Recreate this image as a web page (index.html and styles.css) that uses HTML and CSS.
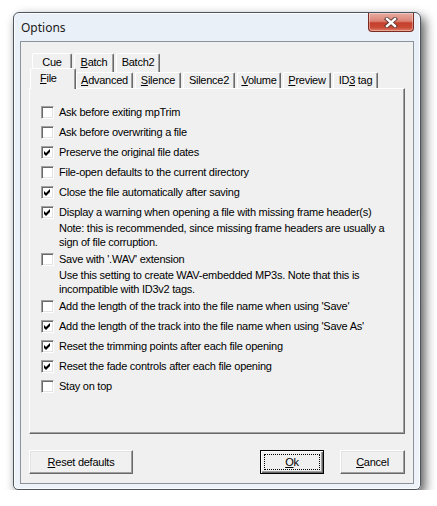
FILE: index.html
```html
<!DOCTYPE html>
<html lang="en">
<head>
  <meta charset="UTF-8">
  <title>Options</title>
  <link rel="stylesheet" href="styles.css">
</head>
<body>

<!-- Dialog window -->
<div class="window">
  <div class="titlebar">
    <span class="title">Options</span>
    <span class="close">
      <svg width="14" height="11" viewBox="0 0 14 11">
        <path d="M3 2 L11 9 M11 2 L3 9" stroke="#5a3430" stroke-width="4.2" stroke-linecap="square" fill="none"/>
        <path d="M3 2 L11 9 M11 2 L3 9" stroke="#fff" stroke-width="2.4" stroke-linecap="square" fill="none"/>
      </svg>
    </span>
  </div>

  <div class="client">
    <!-- Tabs -->
    <div class="tabs">
      <div class="tab-row back">
        <span class="tab w-cue"><span>Cue</span></span>
        <span class="tab w-batch"><span><u>B</u>atch</span></span>
        <span class="tab w-batch2"><span>Batch2</span></span>
      </div>
      <div class="tab-row front">
        <span class="tab w-file selected"><span><u>F</u>ile</span></span>
        <span class="tab w-adv"><span><u>A</u>dvanced</span></span>
        <span class="tab w-sil"><span><u>S</u>ilence</span></span>
        <span class="tab w-sil2"><span>Silence2</span></span>
        <span class="tab w-vol"><span><u>V</u>olume</span></span>
        <span class="tab w-prev"><span><u>P</u>review</span></span>
        <span class="tab w-id3"><span>ID<u>3</u> tag</span></span>
      </div>
    </div>

    <!-- Tab page -->
    <div class="panel">
      <div class="opt"><span class="cb"></span><div class="text">Ask before exiting mpTrim</div></div>
      <div class="opt"><span class="cb"></span><div class="text">Ask before overwriting a file</div></div>
      <div class="opt"><span class="cb checked"></span><div class="text">Preserve the original file dates</div></div>
      <div class="opt"><span class="cb"></span><div class="text">File-open defaults to the current directory</div></div>
      <div class="opt"><span class="cb checked"></span><div class="text">Close the file automatically after saving</div></div>
      <div class="opt long">
        <span class="cb checked"></span>
        <div class="text">
          Display a warning when opening a file with missing frame header(s)
          <div class="note">Note: this is recommended, since missing frame headers are usually a sign of file corruption.</div>
        </div>
      </div>
      <div class="opt long">
        <span class="cb"></span>
        <div class="text">
          Save with '.WAV' extension
          <div class="note">Use this setting to create WAV-embedded MP3s. Note that this is incompatible with ID3v2 tags.</div>
        </div>
      </div>
      <div class="opt"><span class="cb"></span><div class="text">Add the length of the track into the file name when using 'Save'</div></div>
      <div class="opt"><span class="cb checked"></span><div class="text">Add the length of the track into the file name when using 'Save As'</div></div>
      <div class="opt"><span class="cb checked"></span><div class="text">Reset the trimming points after each file opening</div></div>
      <div class="opt"><span class="cb checked"></span><div class="text">Reset the fade controls after each file opening</div></div>
      <div class="opt"><span class="cb"></span><div class="text">Stay on top</div></div>
    </div>

    <!-- Buttons -->
    <div class="buttons">
      <span class="btn w-reset"><span><u>R</u>eset defaults</span></span>
      <div class="btn-group">
        <span class="btn default w-ok"><span class="focus"><span><u>O</u>k</span></span></span>
        <span class="btn w-cancel"><span><u>C</u>ancel</span></span>
      </div>
    </div>
  </div>
</div>

</body>
</html>
```

FILE: styles.css
```css
/* General */
* {
  box-sizing: border-box;
}
body {
  margin: 0;
  background: #fff;
  font-family: "Liberation Sans", Arial, sans-serif;
  font-size: 11px;
  letter-spacing: -0.25px;
  color: #000;
}

/* Window frame */
.window {
  width: 408px;
  height: 478px;
  margin: 12px 0 0 13px;
  border: 1px solid #4c5560;
  border-radius: 6px 6px 5px 5px;
  background: linear-gradient(#e9f0f8, #eef3fa);
  box-shadow: inset 0 0 0 1px #fbfdff, 4px 5px 11px rgba(0, 0, 0, 0.65);
  padding: 0 6px 5px 6px;
  display: flex;
  flex-direction: column;
}

.titlebar {
  height: 28px;
  display: flex;
  justify-content: space-between;
  align-items: flex-start;
}
.title {
  font-family: "Noto Sans", "Open Sans", sans-serif;
  font-size: 12px;
  letter-spacing: 0;
  color: #1b1b1b;
  padding: 6px 0 0 1px;
}
.close {
  width: 46px;
  height: 19px;
  border: 1px solid #7d2a20;
  border-top: none;
  border-radius: 0 0 4px 4px;
  background: linear-gradient(#e8aca2 0%, #dc8476 45%, #c5402c 55%, #c94a36 80%, #de7f68 100%);
  box-shadow: inset 0 0 0 1px rgba(255, 255, 255, 0.35);
  display: flex;
  justify-content: center;
  align-items: center;
}

/* Client area */
.client {
  flex: 1;
  border: 1px solid #8a929c;
  background: #f0f0f0;
  padding: 11px 8px 9px 8px;
  display: flex;
  flex-direction: column;
}

/* Tabs */
.tabs {
  padding-left: 3px;
}
.tab-row {
  display: flex;
  gap: 2px;
}
.tab-row.back {
  height: 19px;
}
.tab-row.front {
  height: 16px;
}
.tab {
  height: 100%;
  border-top: 1px solid #fff;
  border-left: 1px solid #fff;
  border-right: 1px solid #696969;
  border-radius: 2px 2px 0 0;
  box-shadow: inset -1px 0 #a0a0a0;
  display: flex;
  justify-content: center;
  align-items: center;
  padding-bottom: 1px;
}
.tab-row.back .tab {
  padding-bottom: 3px;
}
.tab.selected {
  position: relative;
  z-index: 1;
  height: 21px;
  margin: -4px -2px 0 -2px;
  width: 46px !important;
  background: #f0f0f0;
  justify-content: flex-start;
  padding: 0 0 3px 9px;
}
.w-cue { width: 40px; }
.w-batch { width: 40px; }
.w-batch2 { width: 44px; }
.w-file { width: 42px; }
.w-adv { width: 57px; }
.w-sil { width: 46px; }
.w-sil2 { width: 52px; }
.w-vol { width: 44px; }
.w-prev { width: 48px; }
.w-id3 { width: 45px; }

/* Tab page */
.panel {
  height: 346px;
  border-top: 1px solid #fff;
  border-left: 1px solid #fff;
  border-right: 1px solid #696969;
  border-bottom: 1px solid #696969;
  box-shadow: inset -1px -1px #a0a0a0;
  padding: 16px 10px 0 11px;
}

.opt {
  display: flex;
  gap: 5px;
  line-height: 14px;
  margin-bottom: 6px;
}
.opt.long {
  margin-bottom: 3px;
}
.note {
  margin-top: 2px;
  width: 330px;
}

/* Classic checkbox */
.cb {
  flex: none;
  width: 13px;
  height: 13px;
  margin-top: 1px;
  border: 1px solid;
  border-color: #a0a0a0 #fff #fff #a0a0a0;
  box-shadow: inset 1px 1px #696969, inset -1px -1px #e3e3e3;
  background: #fff;
}
.cb.checked {
  background: #fff url("data:image/svg+xml,%3Csvg xmlns='http://www.w3.org/2000/svg' width='11' height='11'%3E%3Cpolygon points='2,4 4,6 8,2 8,5 4,9 2,7' fill='%23000'/%3E%3C/svg%3E") no-repeat 0 0;
}

/* Buttons */
.buttons {
  margin-top: 16px;
  display: flex;
  justify-content: space-between;
}
.btn-group {
  display: flex;
  gap: 16px;
}
.btn {
  height: 24px;
  border: 1px solid;
  border-color: #fff #696969 #696969 #fff;
  box-shadow: inset -1px -1px #a0a0a0, inset 1px 1px #e3e3e3;
  background: #f0f0f0;
  display: flex;
  justify-content: center;
  align-items: center;
}
.btn.default {
  border: 1px solid #000;
  box-shadow: inset 1px 1px #fff, inset -1px -1px #696969, inset -2px -2px #a0a0a0;
  padding: 3px;
}
.focus {
  width: 100%;
  height: 100%;
  border: 1px dotted #000;
  display: flex;
  justify-content: center;
  align-items: center;
}
.w-reset { width: 104px; }
.w-ok { width: 64px; }
.w-cancel { width: 65px; }
```
